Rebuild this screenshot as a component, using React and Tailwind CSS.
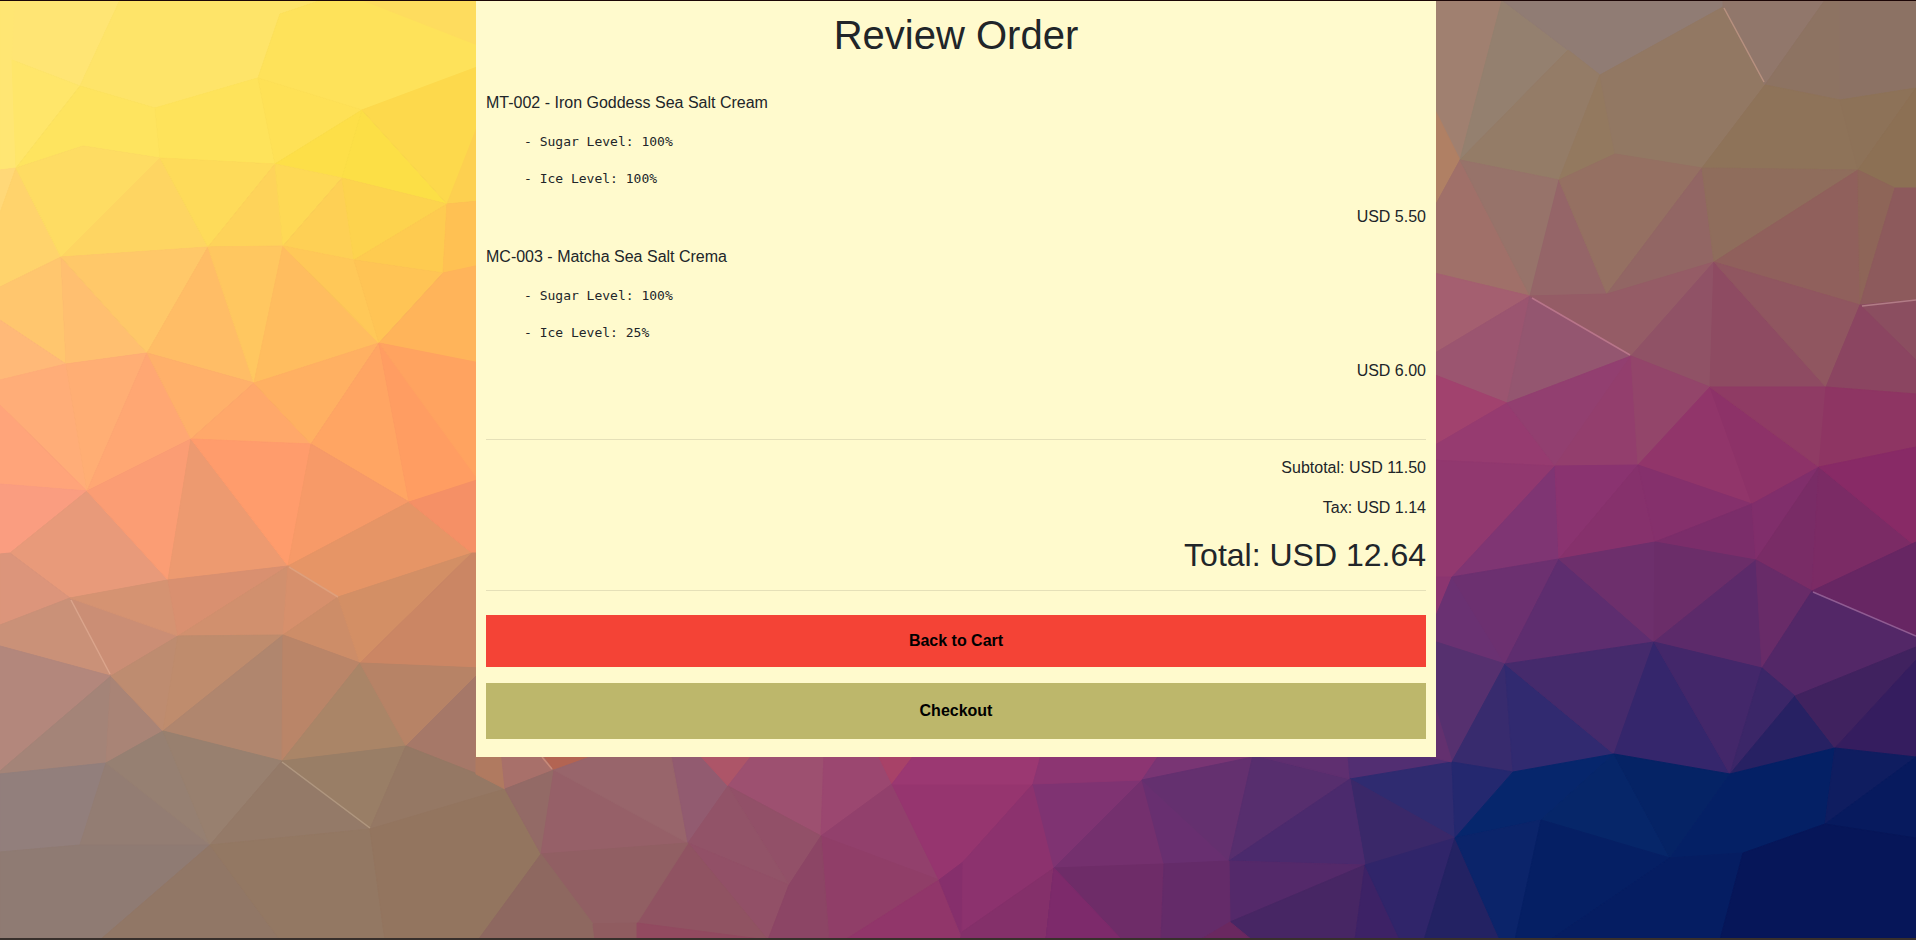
const FACETS = [
  // upper left
  ["#ffe673", "0,0 15,0 16,168 0,170"],
  ["#ffe574", "15,0 120,0 80,86 12,60"],
  ["#ffe66a", "12,60 80,86 16,168"],
  ["#fee469", "120,0 322,0 280,14 258,78 155,108 80,86"],
  ["#fee45f", "80,86 155,108 160,158 83,146 16,168"],
  ["#fee35b", "155,108 258,78 275,164 160,158"],
  ["#fee25a", "280,14 322,0 480,0 480,68 362,110 258,78"],
  ["#fedc5e", "362,0 480,0 480,46"],
  ["#fee156", "258,78 362,110 275,164"],
  ["#fddf48", "275,164 362,110 342,178"],
  ["#fcdf46", "362,110 447,204 342,178"],
  ["#fdd94c", "362,110 480,66 480,130 447,204"],
  ["#fdd050", "447,204 480,120 480,201"],
  ["#ffd878", "0,170 16,168 0,213"],
  ["#ffd36c", "16,168 61,257 0,287 0,213"],
  ["#fedc63", "16,168 83,146 160,158 61,257"],
  ["#fed562", "160,158 208,247 61,257"],
  ["#fedb5a", "160,158 275,164 208,247"],
  ["#fed35a", "275,164 283,246 208,247"],
  ["#fed955", "275,164 342,178 283,246"],
  ["#fed055", "342,178 354,260 283,246"],
  ["#fdd34e", "342,178 447,204 354,260"],
  ["#fecb50", "447,204 443,273 354,260"],
  ["#ffc153", "447,204 480,201 480,266 443,273"],
  ["#ffc66e", "0,287 61,257 66,364 0,320"],
  ["#ffbf70", "61,257 147,353 66,364"],
  ["#ffc869", "61,257 208,247 147,353"],
  ["#ffbd66", "208,247 254,383 147,353"],
  ["#ffc760", "208,247 283,246 254,383"],
  ["#ffbd5f", "283,246 379,343 254,383"],
  ["#ffc858", "283,246 354,260 379,343"],
  ["#ffc455", "354,260 443,273 379,343"],
  ["#ffb45a", "443,273 480,265 480,364 379,343"],
  ["#ffb978", "0,320 66,364 0,380"],
  ["#ffad78", "0,380 66,364 87,491 0,405"],
  ["#ffae74", "66,364 147,353 87,491"],
  ["#ffa773", "147,353 191,439 87,491"],
  ["#ffb06a", "147,353 254,383 191,439"],
  ["#ffa86a", "254,383 311,444 191,439"],
  ["#ffb062", "254,383 379,343 311,444"],
  ["#ffa563", "379,343 409,502 311,444"],
  ["#ff9d62", "379,343 480,480 409,502"],
  ["#ffa360", "379,343 480,363 480,482"],
  ["#ffa47a", "0,405 87,491 0,484"],
  ["#fa9d80", "0,484 87,491 10,553 0,554"],
  ["#e89a7a", "87,491 168,580 70,598 10,553"],
  ["#fb9d74", "87,491 191,439 168,580"],
  ["#ed9a70", "191,439 288,566 168,580"],
  ["#ff9c6c", "191,439 311,444 288,566"],
  ["#f79a68", "311,444 409,502 288,566"],
  ["#e69566", "409,502 472,553 338,597 288,566"],
  ["#f59066", "409,502 480,479 480,553 472,553"],
  // lower left
  ["#dc957b", "0,554 10,553 70,598 0,625"],
  ["#ca9178", "0,625 70,598 111,676 0,646"],
  ["#cb8e75", "70,598 178,636 111,676"],
  ["#d59372", "70,598 168,580 178,636"],
  ["#d99070", "168,580 288,566 178,636"],
  ["#d1906e", "288,566 283,635 178,636"],
  ["#d7906c", "288,566 338,597 283,635"],
  ["#cd8d68", "338,597 360,663 283,635"],
  ["#d38f65", "338,597 472,553 360,663"],
  ["#cb8664", "472,553 480,553 480,668 360,663"],
  ["#b3877c", "0,646 111,676 0,771"],
  ["#a48478", "111,676 106,763 0,774 0,771"],
  ["#a98476", "111,676 163,731 106,763"],
  ["#be8c70", "111,676 178,636 163,731"],
  ["#bf8c6d", "178,636 283,635 163,731"],
  ["#b0866e", "283,635 282,761 163,731"],
  ["#ba8568", "283,635 360,663 282,761"],
  ["#aa8567", "360,663 406,746 282,761"],
  ["#b78366", "360,663 480,668 480,672 406,746"],
  ["#a67868", "480,672 480,775 406,746"],
  ["#927f7c", "0,774 106,763 80,845 0,852"],
  ["#937d73", "106,763 210,845 80,845"],
  ["#968072", "106,763 163,731 210,845"],
  ["#98806f", "163,731 282,761 210,845"],
  ["#947a68", "282,761 370,829 210,845"],
  ["#997e66", "282,761 406,746 370,829"],
  ["#957864", "406,746 480,775 505,789 370,829"],
  ["#8f7b73", "0,852 80,845 210,845 100,940 0,940"],
  ["#917766", "210,845 280,940 100,940"],
  ["#937863", "210,845 370,829 385,940 280,940"],
  ["#93755f", "370,829 505,789 541,854 480,940 385,940"],
  // bottom centre
  ["#b07a60", "476,740 502,740 505,789 476,774"],
  ["#a8706a", "500,740 536,745 554,770 505,789"],
  ["#b36452", "536,745 610,745 590,757 554,770"],
  ["#936a66", "505,789 554,770 541,854"],
  ["#966068", "554,770 688,843 541,854"],
  ["#98656b", "554,770 590,757 671,757 688,843"],
  ["#925b70", "671,750 700,750 728,786 688,843"],
  ["#ad5568", "695,750 758,750 728,786"],
  ["#9d5070", "728,786 752,755 824,755 821,836"],
  ["#9b4770", "824,755 880,755 892,784 821,836"],
  ["#a84268", "878,755 916,755 892,784"],
  ["#925068", "728,786 821,836 789,885"],
  ["#925368", "728,786 789,885 688,843"],
  ["#925067", "688,843 789,885 768,940"],
  ["#905362", "688,843 768,940 637,940 637,923"],
  ["#915f63", "541,854 688,843 637,923 593,924"],
  ["#8e6860", "541,854 593,924 595,940 478,940"],
  ["#905c60", "593,924 637,923 637,940 595,940"],
  ["#924a60", "637,923 768,940 637,940"],
  ["#92406c", "821,836 892,784 939,880"],
  ["#903e68", "821,836 939,880 845,940 828,940"],
  ["#8c4565", "821,836 829,940 768,940 789,885"],
  ["#91366a", "939,880 962,940 845,940"],
  ["#96356f", "892,784 1033,784 963,862 939,880"],
  ["#9b3872", "914,755 1041,755 1033,784 892,784"],
  ["#862f6c", "939,880 963,862 963,940"],
  ["#8c326e", "1033,784 1054,868 962,935 963,862"],
  ["#84306a", "1054,868 1046,940 960,940 962,932"],
  ["#7f3372", "1033,784 1142,780 1054,868"],
  ["#8c3572", "1041,755 1161,755 1142,780 1033,784"],
  ["#793574", "1159,755 1253,755 1253,759 1142,780"],
  ["#74306e", "1142,780 1164,864 1054,868"],
  ["#682f70", "1142,780 1229,861 1164,864"],
  ["#64306f", "1142,780 1253,757 1229,861"],
  ["#572e6e", "1253,755 1350,779 1229,861"],
  ["#5f2f70", "1253,755 1348,755 1350,779"],
  ["#522e72", "1348,755 1438,755 1452,762 1350,779"],
  ["#2f2b70", "1350,779 1452,762 1455,838"],
  ["#3a2869", "1350,779 1455,838 1365,865"],
  ["#4b2a6d", "1229,861 1350,779 1365,865"],
  ["#54296a", "1229,861 1365,865 1230,922"],
  ["#472664", "1365,865 1355,940 1250,940 1230,922"],
  ["#6e2c68", "1054,868 1164,864 1161,940 1046,940"],
  ["#7d2a6b", "1054,868 1122,940 1046,940"],
  ["#642b69", "1164,864 1229,861 1230,922 1200,940 1161,940"],
  ["#6a2860", "1230,922 1252,940 1200,940"],
  ["#3d2266", "1365,865 1402,940 1355,940"],
  ["#30256a", "1365,865 1455,838 1424,940 1400,940"],
  ["#232263", "1455,838 1500,940 1424,940"],
  // upper right
  ["#a08070", "1430,0 1502,0 1460,160 1430,100"],
  ["#b08064", "1430,100 1460,160 1430,215"],
  ["#94806f", "1502,0 1568,50 1460,160"],
  ["#907c74", "1502,0 1723,0 1723,7 1600,75 1568,50"],
  ["#947c67", "1460,160 1568,50 1600,75 1559,180"],
  ["#93795f", "1600,75 1615,154 1559,180"],
  ["#927863", "1600,75 1723,7 1765,85 1702,168 1615,154"],
  ["#91776b", "1723,0 1825,0 1765,85 1723,7"],
  ["#8d7362", "1825,0 1840,0 1840,100 1765,85"],
  ["#8c7264", "1840,0 1916,0 1916,88 1840,100"],
  ["#8e7359", "1765,85 1840,100 1858,170 1702,168"],
  ["#8d7258", "1840,100 1916,88 1858,170"],
  ["#8c7054", "1916,88 1916,188 1895,188 1858,170"],
  ["#a07069", "1430,215 1460,160 1530,296 1430,272"],
  ["#97736a", "1460,160 1559,180 1530,296"],
  ["#956568", "1559,180 1607,294 1530,296"],
  ["#957062", "1559,180 1615,154 1702,168 1607,294"],
  ["#926664", "1702,168 1714,262 1607,294"],
  ["#8f6d5c", "1702,168 1858,170 1714,262"],
  ["#90605c", "1858,170 1860,305 1714,262"],
  ["#8e6558", "1858,170 1895,188 1860,305"],
  ["#8d5a5c", "1895,188 1916,188 1916,300 1860,305"],
  ["#a45f70", "1430,272 1530,296 1430,356"],
  ["#9b5570", "1430,356 1530,296 1507,403 1430,373"],
  ["#945670", "1530,296 1631,356 1507,403"],
  ["#955c66", "1530,296 1607,294 1714,262 1631,356"],
  ["#905266", "1714,262 1710,387 1631,356"],
  ["#8e4b62", "1714,262 1826,387 1710,387"],
  ["#905660", "1714,262 1860,305 1826,387"],
  ["#8b4e60", "1860,305 1916,300 1916,360"],
  ["#8b4561", "1860,305 1916,360 1916,394 1826,387"],
  ["#a1426e", "1430,373 1507,403 1430,448"],
  ["#963b70", "1430,448 1507,403 1555,466 1430,460"],
  ["#923f70", "1507,403 1631,356 1555,466"],
  ["#933e6d", "1631,356 1638,465 1555,466"],
  ["#93456a", "1631,356 1710,387 1638,465"],
  ["#91356a", "1710,387 1752,504 1638,465"],
  ["#8d3268", "1710,387 1819,467 1752,504"],
  ["#8f3b64", "1710,387 1826,387 1819,467"],
  ["#8e3563", "1826,387 1916,394 1916,447 1819,467"],
  // lower right
  ["#91386f", "1430,460 1555,466 1452,577 1430,577"],
  ["#7f3573", "1555,466 1559,559 1452,577"],
  ["#8a3370", "1555,466 1638,465 1559,559"],
  ["#86316c", "1638,465 1655,542 1559,559"],
  ["#85306c", "1638,465 1752,504 1655,542"],
  ["#7b2d6a", "1752,504 1756,560 1655,542"],
  ["#802e6b", "1752,504 1819,467 1756,560"],
  ["#792c66", "1819,467 1812,591 1756,560"],
  ["#7b2b65", "1819,467 1913,544 1812,591"],
  ["#882a66", "1819,467 1916,447 1916,544 1913,544"],
  ["#8b3570", "1430,577 1452,577 1430,630"],
  ["#6a3172", "1452,577 1505,664 1430,640 1430,630"],
  ["#6c3070", "1452,577 1559,559 1505,664"],
  ["#5e2d6f", "1559,559 1654,642 1505,664"],
  ["#6d2f6c", "1559,559 1655,542 1654,642"],
  ["#6b2d69", "1655,542 1756,560 1654,642"],
  ["#5c2a6a", "1756,560 1762,668 1654,642"],
  ["#682b68", "1756,560 1812,591 1762,668"],
  ["#532767", "1812,591 1916,636 1916,647 1795,696 1762,668"],
  ["#672663", "1812,591 1916,542 1916,636"],
  ["#56306f", "1430,640 1505,664 1452,762 1430,690"],
  ["#63306f", "1430,690 1452,762 1430,757"],
  ["#382b6e", "1505,664 1513,772 1452,762"],
  ["#312a70", "1505,664 1614,754 1513,772"],
  ["#452a6c", "1505,664 1654,642 1614,754"],
  ["#35266c", "1654,642 1730,774 1614,754"],
  ["#43276a", "1654,642 1762,668 1730,774"],
  ["#3b2668", "1762,668 1795,696 1730,774"],
  ["#272163", "1795,696 1835,748 1730,774"],
  ["#40225f", "1795,696 1916,647 1916,660 1835,748"],
  ["#351d5f", "1916,660 1916,757 1835,748"],
  ["#24286f", "1452,762 1513,772 1455,838"],
  ["#06266c", "1513,772 1614,754 1541,820 1455,838"],
  ["#0b246a", "1455,838 1541,820 1515,940 1500,940"],
  ["#062669", "1614,754 1670,858 1541,820"],
  ["#052365", "1614,754 1730,774 1670,858"],
  ["#042065", "1730,774 1835,748 1825,824 1743,853 1670,858"],
  ["#0f1d60", "1835,748 1916,757 1825,824"],
  ["#071a5e", "1916,757 1916,838 1825,824"],
  ["#051f64", "1541,820 1670,858 1550,940 1515,940"],
  ["#051d62", "1670,858 1743,853 1720,940 1550,940"],
  ["#061659", "1743,853 1825,824 1916,838 1916,940 1720,940"],
];

const STREAKS = [
  ["#dfa07c", "M289 567 338 597"],
  ["#dba58c", "M71 600 110 674"],
  ["#b09780", "M282 762 370 828"],
  ["#b8917f", "M1724 8 1764 82"],
  ["#b8758a", "M1532 298 1630 355"],
  ["#b27c86", "M1862 306 1916 300"],
  ["#8f5c92", "M1813 592 1916 636"],
  ["#c98a78", "M542 757 552 769"],
];

const ITEMS = [
  {
    name: "MT-002 - Iron Goddess Sea Salt Cream",
    options: ["- Sugar Level: 100%", "- Ice Level: 100%"],
    price: "USD 5.50",
  },
  {
    name: "MC-003 - Matcha Sea Salt Crema",
    options: ["- Sugar Level: 100%", "- Ice Level: 25%"],
    price: "USD 6.00",
  },
];

function Backdrop() {
  return (
    <svg
      className="col-start-1 row-start-1 h-full min-h-0 w-full"
      viewBox="0 1 1916 937"
      preserveAspectRatio="xMidYMid slice"
      aria-hidden="true"
    >
      {FACETS.map(([color, points]) => (
        <polygon
          key={points}
          points={points}
          fill={color}
          stroke={color}
          strokeWidth="1"
          strokeLinejoin="round"
        />
      ))}
      {STREAKS.map(([color, d]) => (
        <path key={d} d={d} stroke={color} strokeWidth="1.5" fill="none" />
      ))}
    </svg>
  );
}

function OrderItem({ item }) {
  return (
    <li className="flex flex-col gap-4">
      <p>{item.name}</p>
      {item.options.map((option) => (
        <p
          key={option}
          className="pl-[38px] font-['DejaVu_Sans_Mono',monospace] text-[13px] leading-[21px]"
        >
          {option}
        </p>
      ))}
      <p className="text-right">{item.price}</p>
    </li>
  );
}

export default function App() {
  return (
    <div className="grid min-h-screen grid-cols-1 border-t border-b-2 border-t-[#1c0606] border-b-[#38302c] bg-[#93606a] font-['Liberation_Sans',Arial,sans-serif] text-base text-[#212529]">
      <Backdrop />
      <div className="z-10 col-start-1 row-start-1 pr-1">
        <main className="mx-auto w-full max-w-[960px] bg-[#fffacd] px-2.5 pt-2.5 pb-[18px]">
          <h1 className="text-center text-[40px] leading-[48px]">Review Order</h1>
          <ul className="mt-8 flex flex-col gap-4">
            {ITEMS.map((item) => (
              <OrderItem key={item.name} item={item} />
            ))}
          </ul>
          <hr className="mt-14 border-black/10" />
          <div className="mt-4 flex flex-col gap-4 text-right">
            <p>Subtotal: USD 11.50</p>
            <p>Tax: USD 1.14</p>
            <h2 className="text-[32px] leading-[38px]">Total: USD 12.64</h2>
          </div>
          <hr className="mt-4 border-black/10" />
          <div className="mt-6 flex flex-col gap-4">
            <button type="button" className="h-[52px] w-full bg-[#f44336] font-bold text-black">
              Back to Cart
            </button>
            <button type="button" className="h-14 w-full bg-[#bdb76b] font-bold text-black">
              Checkout
            </button>
          </div>
        </main>
      </div>
    </div>
  );
}
